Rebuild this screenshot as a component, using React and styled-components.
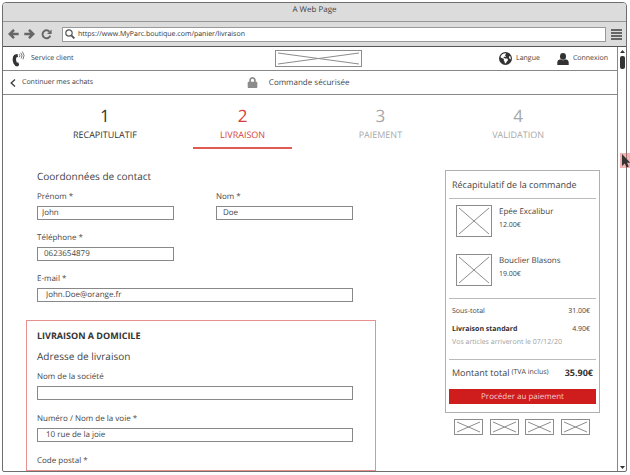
import React from "react";
import styled, { createGlobalStyle } from "styled-components";
import { FaLock } from "react-icons/fa";
import { FaEarthAmericas } from "react-icons/fa6";

const GlobalStyle = createGlobalStyle`
  * { box-sizing: border-box; }
  body {
    margin: 0;
    background: #fff;
    color: #444;
    font-family: "Open Sans", "Noto Sans", sans-serif;
    font-size: 8px;
    line-height: 14px;
    text-rendering: geometricPrecision;
  }
  button, input { font: inherit; color: inherit; text-rendering: inherit; }
  button { background: none; border: 0; padding: 0; cursor: pointer; }
  a { color: inherit; text-decoration: none; }
  h1, h2, h3, p, ol, ul { margin: 0; padding: 0; font-weight: 400; list-style: none; }
  svg { display: block; flex: none; }
`;

const Screen = styled.div`
  position: relative;
  height: 100vh;
  padding: 2px 3px 3px 2px;
  overflow: hidden;
`;

const BrowserWindow = styled.div`
  display: flex;
  flex-direction: column;
  height: 100%;
  border: 1px solid #6e6e6e;
  border-radius: 4px 4px 2px 2px;
  overflow: hidden;
`;

const TitleBar = styled.div`
  flex: none;
  height: 19px;
  background: #dcdcdc;
  border-bottom: 1px solid #969696;
  text-align: center;
`;

const Toolbar = styled.div`
  flex: none;
  display: flex;
  align-items: center;
  height: 25px;
  padding: 0 3px 0 2px;
  background: #dcdcdc;
  border-bottom: 1px solid #555;
  color: #666;
`;

const ToolButton = styled.button`
  display: grid;
  place-items: center;
  width: ${(p) => p.$width || 16}px;
  height: 16px;
`;

const AddressBar = styled.label`
  flex: 1;
  display: flex;
  align-items: center;
  gap: 3px;
  height: 15px;
  margin: 0 4px 0 7px;
  padding: 0 2px;
  background: #fff;
  border: 1px solid #999;
`;

const AddressInput = styled.input`
  flex: 1;
  min-width: 0;
  padding: 0;
  border: 0;
  outline: 0;
  font-size: 7px;
  line-height: 13px;
  color: #333;
`;

const Viewport = styled.div`
  flex: 1;
  min-height: 0;
  display: flex;
`;

const Page = styled.div`
  flex: 1;
  min-width: 0;
  display: flex;
  flex-direction: column;
  overflow: hidden;
`;

const Scrollbar = styled.div`
  flex: none;
  display: flex;
  flex-direction: column;
  align-items: center;
  width: 9px;
  padding: 3px 0 2px;
  border-left: 1px solid #888;
`;

const Thumb = styled.div`
  width: 5px;
  height: 13px;
  margin: 3px 0 auto;
  border-radius: 2px;
  background: #333;
`;

const HeaderRow = styled.header`
  flex: none;
  display: grid;
  grid-template-columns: 15fr 87px 14fr;
  align-items: center;
  height: 24px;
  padding: 0 9px;
  border-bottom: 1px solid #888;
`;

const SubHeader = styled.div`
  flex: none;
  display: grid;
  grid-template-columns: 10fr auto 11fr;
  align-items: center;
  height: 24px;
  padding: 0 7px;
  border-bottom: 1px solid #888;
`;

const HeaderLink = styled.a`
  display: flex;
  align-items: center;
  gap: ${(p) => p.$gap || 4}px;
  color: #3c3c3c;
  font-size: 7px;
`;

const HeaderActions = styled.nav`
  display: flex;
  justify-content: flex-end;
  gap: 17px;
`;

const Secure = styled.p`
  display: flex;
  align-items: center;
  gap: 11px;
  svg { color: #8c8c8c; }
`;

const Steps = styled.ol`
  flex: none;
  display: grid;
  grid-template-columns: repeat(4, 1fr);
  padding: 11px 30px 0 33px;
`;

const stepColors = { done: "#333", current: "#d9403a", todo: "#a8a8a8" };

const Step = styled.li`
  justify-self: center;
  width: 99px;
  padding-bottom: 3px;
  border-bottom: 2px solid ${(p) => (p.$state === "current" ? "#e05a54" : "transparent")};
  color: ${(p) => stepColors[p.$state]};
  font-size: 9px;
  line-height: 19px;
  text-align: center;
`;

const StepNumber = styled.span`
  display: block;
  font-size: 17px;
`;

const Content = styled.main`
  flex: 1;
  min-height: 0;
  display: grid;
  grid-template-columns: minmax(0, 1fr) 155px;
  gap: 69px;
  padding: 17px 17px 0 23px;
`;

const Form = styled.form`
  display: flex;
  flex-direction: column;
  min-height: 0;
`;

const Contact = styled.section`
  padding: 0 23px 18px 11px;
`;

const Delivery = styled.section`
  flex: 1;
  min-height: 0;
  padding: 5px 22px 0 10px;
  border: 1px solid #e88f8f;
  overflow: hidden;
`;

const Heading = styled.h2`
  font-size: 10px;
  line-height: 20px;
`;

const BoxTitle = styled.h3`
  color: #333;
  font-size: 9px;
  font-weight: 700;
  line-height: 20px;
`;

const FieldGrid = styled.div`
  display: grid;
  grid-template-columns: 1fr 1fr;
  gap: ${(p) => p.$gap || 12}px 42px;
  margin-top: 4px;
`;

const FieldBox = styled.div`
  grid-column: ${(p) => (p.$wide ? "1 / -1" : "1")};
  & + &:nth-child(2) { grid-column: ${(p) => (p.$wide ? "1 / -1" : "2")}; }
  display: flex;
  flex-direction: column;
  gap: 2px;
`;

const TextInput = styled.input`
  width: 100%;
  height: 14px;
  padding: 0 ${(p) => p.$inset}px 2px;
  border: 1px solid #888;
  border-radius: 0;
  background: #fff;
  line-height: 10px;
`;

function Field({ id, label, value = "", wide, inset = 6 }) {
  return (
    <FieldBox $wide={wide}>
      <label htmlFor={id}>{label}</label>
      <TextInput id={id} defaultValue={value} $inset={inset} />
    </FieldBox>
  );
}

const Aside = styled.aside`
  margin-top: 4px;
`;

const Card = styled.section`
  padding: 0 3px 8px;
  border: 1px solid #b0b0b0;
`;

const CardTitle = styled.h2`
  padding: 4px 3px 3px;
  border-bottom: 1px solid #bbb;
  font-size: 9px;
  line-height: 20px;
`;

const Products = styled.ul`
  display: grid;
  gap: 17px;
  padding: 6px 7px 12px;
  border-bottom: 1px solid #bbb;
`;

const Product = styled.li`
  display: flex;
  gap: 7px;
`;

const Price = styled.p`
  font-size: 7px;
  line-height: 13px;
`;

const Line = styled.div`
  display: flex;
  justify-content: space-between;
  padding: 0 6px 0 3px;
  font-size: 7px;
  strong { color: #333; }
`;

const Costs = styled.div`
  padding: 6px 0 10px;
  border-bottom: 1px solid #bbb;
  ${Line} + ${Line} { margin-top: 4px; }
`;

const Note = styled.p`
  padding-left: 3px;
  color: #a0a0a0;
  font-size: 7px;
  line-height: 12px;
`;

const Total = styled.div`
  display: flex;
  align-items: center;
  padding: 6px 3px 9px;
  font-size: 9px;
  small { margin-left: 2px; font-size: 7px; }
  strong { margin-left: auto; color: #333; }
`;

const PayButton = styled.button`
  display: block;
  width: 100%;
  height: 15px;
  background: #cf1c1c;
  color: #f6cccc;
  line-height: 14px;
`;

const PaymentMethods = styled.div`
  display: flex;
  justify-content: space-between;
  padding: 6px 10px 0 9px;
`;

const Pointer = styled.div`
  position: absolute;
  top: 153px;
  right: 0;
  width: 10px;
  height: 15px;
  background: rgba(226, 90, 90, 0.45);
  overflow: hidden;
`;

function Placeholder({ width, height, inset = 3 }) {
  return (
    <svg width={width} height={height} fill="none" stroke="#8c8c8c" aria-hidden="true">
      <rect x="0.5" y="0.5" width={width - 1} height={height - 1} />
      <path d={`M${inset} ${inset}L${width - inset} ${height - inset}M${width - inset} ${inset}L${inset} ${height - inset}`} />
    </svg>
  );
}

function Arrow({ up }) {
  return (
    <svg width="5" height="3" aria-hidden="true">
      <path d={up ? "M0 3L2.5 0L5 3Z" : "M0 0L2.5 3L5 0Z"} fill="#333" />
    </svg>
  );
}

function NavArrow({ forward }) {
  return (
    <svg width="11" height="10" viewBox="0 0 11 10" fill="none" stroke="currentColor" strokeWidth="2.6" aria-hidden="true">
      <path d={forward ? "M0.3 5H9M5 0.9L9.2 5L5 9.1" : "M10.7 5H2M6 0.9L1.8 5L6 9.1"} />
    </svg>
  );
}

const steps = [
  ["RECAPITULATIF", "done"],
  ["LIVRAISON", "current"],
  ["PAIEMENT", "todo"],
  ["VALIDATION", "todo"],
];

const products = [
  ["Epée Excalibur", "12.00€"],
  ["Bouclier Blasons", "19.00€"],
];

export default function App() {
  return (
    <Screen>
      <GlobalStyle />
      <BrowserWindow>
        <TitleBar>A Web Page</TitleBar>
        <Toolbar>
          <ToolButton aria-label="Précédent"><NavArrow /></ToolButton>
          <ToolButton aria-label="Suivant"><NavArrow forward /></ToolButton>
          <ToolButton aria-label="Actualiser" $width={18}>
            <svg width="11" height="11" viewBox="0 0 11 11">
              <path d="M8.5 2.6A4 4 0 1 0 9.3 6.6" fill="none" stroke="currentColor" strokeWidth="1.9" />
              <path d="M10.6 0.4V5H6Z" fill="currentColor" />
            </svg>
          </ToolButton>
          <AddressBar>
            <svg width="10" height="10" viewBox="0 0 10 10" fill="none" stroke="#555" aria-hidden="true">
              <circle cx="4" cy="4" r="3.2" strokeWidth="1.2" />
              <path d="M6.3 6.3L9.4 9.4" strokeWidth="1.9" />
            </svg>
            <AddressInput aria-label="Adresse" defaultValue="https://www.MyParc.boutique.com/panier/livraison" />
          </AddressBar>
          <ToolButton aria-label="Menu" $width={13}>
            <svg width="11" height="11" viewBox="0 0 11 11">
              <path d="M0 1H11M0 4H11M0 7H11M0 10H11" stroke="currentColor" strokeWidth="1.8" />
            </svg>
          </ToolButton>
        </Toolbar>
        <Viewport>
          <Page>
            <HeaderRow>
              <HeaderLink href="#service" $gap={6}>
                <svg width="13" height="16" viewBox="0 0 13 16" aria-hidden="true">
                  <path d="M3.8 3.2L5.6 3.1L6 6L4.3 6.5Q3.5 9.2 4.8 11.6L6.5 11.4L7.1 14.3L5.3 15.4Q2.8 15.2 1.4 12.2Q0 8.8 1 5.8Q2 3.6 3.8 3.2Z" fill="#333" />
                  <path d="M7.2 3.2Q8.6 4.6 7.4 6.2M8.8 1.8Q11 4.4 9.2 7.4M10.4 0.6Q13.4 4.4 11 8.4" fill="none" stroke="#555" strokeWidth="0.8" />
                </svg>
                Service client
              </HeaderLink>
              <Placeholder width={87} height={17} />
              <HeaderActions>
                <HeaderLink href="#langue"><FaEarthAmericas size={13} color="#333" />Langue</HeaderLink>
                <HeaderLink href="#connexion">
                  <svg width="12" height="12" viewBox="0 0 12 12" aria-hidden="true">
                    <ellipse cx="6" cy="3.4" rx="3" ry="3.4" fill="#333" />
                    <path d="M0.3 12V9Q0.4 6.8 3.2 6.3Q6 8.2 8.8 6.3Q11.6 6.8 11.7 9V12Z" fill="#333" />
                  </svg>
                  Connexion
                </HeaderLink>
              </HeaderActions>
            </HeaderRow>
            <SubHeader>
              <HeaderLink href="#achats" $gap={6}>
                <svg width="6" height="8" viewBox="0 0 6 8" aria-hidden="true">
                  <path d="M5 0.5L1.2 4L5 7.5" fill="none" stroke="#444" strokeWidth="1.4" />
                </svg>
                Continuer mes achats
              </HeaderLink>
              <Secure><FaLock size={11} />Commande sécurisée</Secure>
            </SubHeader>
            <Steps>
              {steps.map(([name, state], i) => (
                <Step key={name} $state={state} aria-current={state === "current" ? "step" : undefined}>
                  <StepNumber>{i + 1}</StepNumber>
                  {name}
                </Step>
              ))}
            </Steps>
            <Content>
              <Form>
                <Contact>
                  <Heading>Coordonnées de contact</Heading>
                  <FieldGrid $gap={11}>
                    <Field id="prenom" label="Prénom *" value="John" inset={4} />
                    <Field id="nom" label="Nom *" value="Doe" />
                    <Field id="telephone" label="Téléphone *" value="0623654879" />
                    <Field id="email" label="E-mail *" value="John.Doe@orange.fr" inset={8} wide />
                  </FieldGrid>
                </Contact>
                <Delivery>
                  <BoxTitle>LIVRAISON A DOMICILE</BoxTitle>
                  <Heading>Adresse de livraison</Heading>
                  <FieldGrid>
                    <Field id="societe" label="Nom de la société" wide />
                    <Field id="voie" label="Numéro / Nom de la voie *" value="10 rue de la joie" inset={8} wide />
                    <Field id="cp" label="Code postal *" wide />
                  </FieldGrid>
                </Delivery>
              </Form>
              <Aside>
                <Card>
                  <CardTitle>Récapitulatif de la commande</CardTitle>
                  <Products>
                    {products.map(([name, price]) => (
                      <Product key={name}>
                        <Placeholder width={36} height={32} />
                        <div>
                          <p>{name}</p>
                          <Price>{price}</Price>
                        </div>
                      </Product>
                    ))}
                  </Products>
                  <Costs>
                    <Line><span>Sous-total</span><span>31.00€</span></Line>
                    <Line><strong>Livraison standard</strong><span>4.90€</span></Line>
                    <Note>Vos articles arriveront le 07/12/20</Note>
                  </Costs>
                  <Total>
                    Montant total <small>(TVA inclus)</small>
                    <strong>35.90€</strong>
                  </Total>
                  <PayButton type="button">Procéder au paiement</PayButton>
                </Card>
                <PaymentMethods>
                  {[1, 2, 3, 4].map((n) => <Placeholder key={n} width={29} height={16} />)}
                </PaymentMethods>
              </Aside>
            </Content>
          </Page>
          <Scrollbar>
            <Arrow up />
            <Thumb />
            <Arrow />
          </Scrollbar>
        </Viewport>
      </BrowserWindow>
      <Pointer>
        <svg width="10" height="15" viewBox="0 0 10 15" aria-hidden="true">
          <path d="M2 1V13L4.8 10.6L6.6 14.6L8.8 13.6L7 9.8H10.4Z" fill="#333" />
        </svg>
      </Pointer>
    </Screen>
  );
}
